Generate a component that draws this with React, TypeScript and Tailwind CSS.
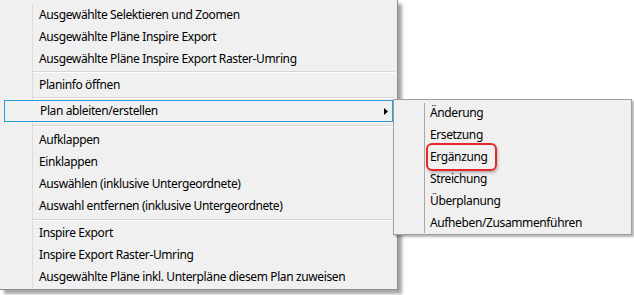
import React from 'react';

type Entry = { label: string; sub?: boolean } | { sep: number; line: number };

const MAIN: Entry[] = [
  { label: 'Ausgewählte Selektieren und Zoomen' },
  { label: 'Ausgewählte Pläne Inspire Export' },
  { label: 'Ausgewählte Pläne Inspire Export Raster-Umring' },
  { sep: 4, line: 1 },
  { label: 'Planinfo öffnen' },
  { sep: 4, line: 1 },
  { label: 'Plan ableiten/erstellen', sub: true },
  { sep: 7, line: 3 },
  { label: 'Aufklappen' },
  { label: 'Einklappen' },
  { label: 'Auswählen (inklusive Untergeordnete)' },
  { label: 'Auswahl entfernen (inklusive Untergeordnete)' },
  { sep: 5, line: 2 },
  { label: 'Inspire Export' },
  { label: 'Inspire Export Raster-Umring' },
  { label: 'Ausgewählte Pläne inkl. Unterpläne diesem Plan zuweisen' },
];

const SUB = [
  'Änderung',
  'Ersetzung',
  'Ergänzung',
  'Streichung',
  'Überplanung',
  'Aufheben/Zusammenführen',
];

export default function App() {
  return (
    <div
      className="relative w-[634px] h-[295px] bg-white overflow-hidden text-[12px] tracking-[-0.38px] text-black"
      style={{ fontFamily: '"Noto Sans", "Open Sans", sans-serif' }}
    >
      {/* Main context menu */}
      <div className="w-[398px] bg-[#f0f0f0] border-r border-b border-[#8c8c8c] pt-[4px] pb-[1px] shadow-[4px_4px_3px_rgba(0,0,0,0.35)]">
        {MAIN.map((e, i) => {
          if ('sep' in e) {
            return (
              <div key={i} className="flex" style={{ height: e.sep }}>
                <div className="w-[33px] shrink-0 border-r border-[#dcdcdc]" />
                <div className="flex-1 pr-[2px]" style={{ paddingTop: e.line }}>
                  <div className="h-px bg-[#d7d7d7]" />
                  <div className="h-px bg-white" />
                </div>
              </div>
            );
          }
          if (e.sub) {
            return (
              <div
                key={i}
                className="mx-[4px] h-[22px] border border-[#2b9ad8] flex items-center"
              >
                <div className="w-[29px] shrink-0" />
                <span className="flex-1 pl-[6px] leading-[20px] whitespace-nowrap">
                  {e.label}
                </span>
                <svg width="4" height="7" viewBox="0 0 4 7" className="mr-[4px]">
                  <path d="M0 0 L4 3.5 L0 7 Z" fill="#000" />
                </svg>
              </div>
            );
          }
          return (
            <div key={i} className="flex h-[22px]">
              <div className="w-[33px] shrink-0 border-r border-[#dcdcdc]" />
              <span className="pl-[6px] leading-[22px] whitespace-nowrap">{e.label}</span>
            </div>
          );
        })}
      </div>

      {/* Submenu */}
      <div className="absolute left-[393px] top-[99px] w-[239px] h-[136px] bg-[#f0f0f0] border border-[#a0a0a0] shadow-[2px_2px_2px_rgba(0,0,0,0.3)] pt-[2px] flex">
        <div className="w-[30px] shrink-0" />
        <div className="w-px bg-[#a8a8a8] my-[1px]" />
        <div className="flex flex-col">
          {SUB.map((s) => (
            <div key={s} className="h-[22px] pl-[5px] leading-[22px] whitespace-nowrap">
              {s}
            </div>
          ))}
        </div>
      </div>

      {/* Annotation */}
      <div className="absolute left-[426px] top-[143px] w-[71px] h-[28px] border-2 border-[#e5262b] rounded-[6px] shadow-[1px_2px_3px_rgba(0,0,0,0.25)]" />
    </div>
  );
}
